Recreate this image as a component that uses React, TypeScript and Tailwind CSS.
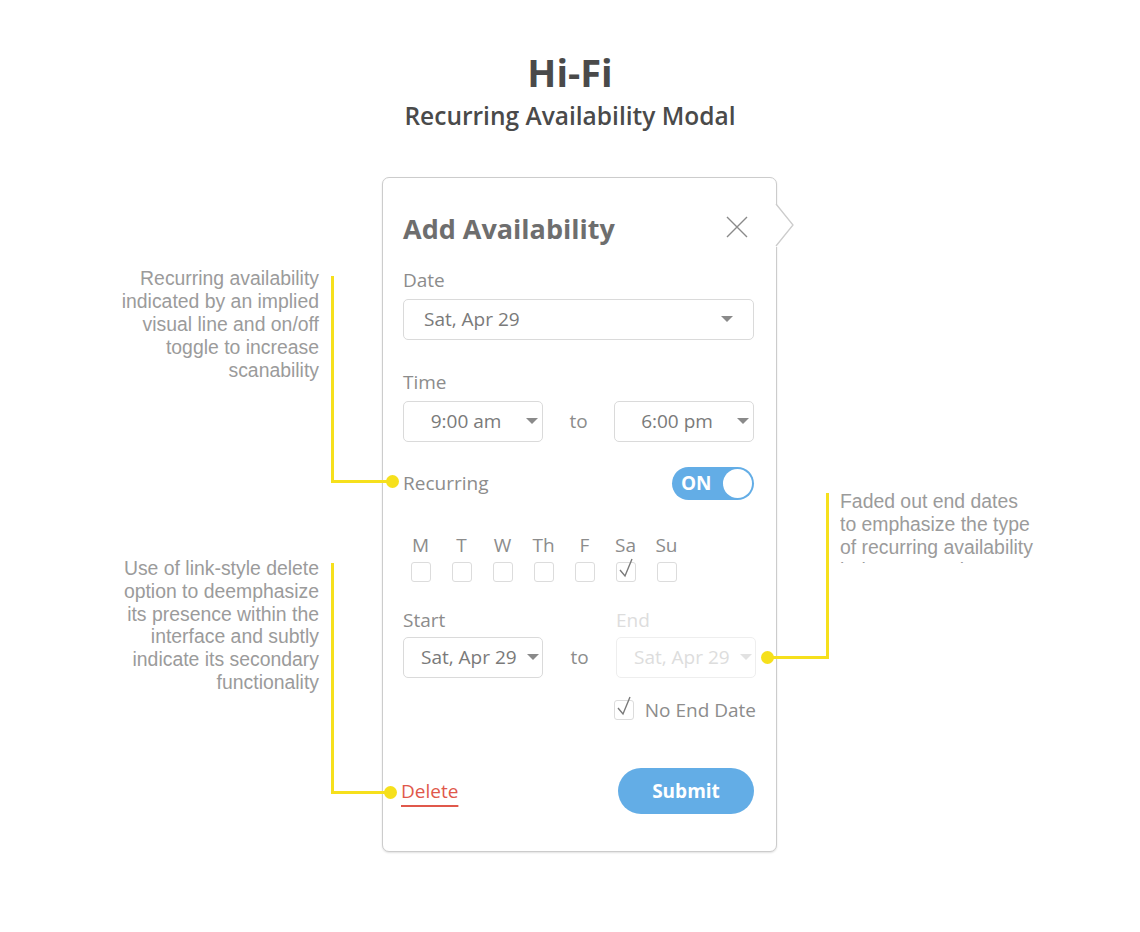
import React from "react";

const Caret = ({ faded = false }: { faded?: boolean }) => (
  <svg width="12" height="7" viewBox="0 0 12 7" className="shrink-0">
    <path d="M0 0 L12 0 L6 6 Z" fill={faded ? "#e2e2e2" : "#8a8a8a"} />
  </svg>
);

const Check = ({ checked = false }: { checked?: boolean }) => (
  <div className="relative w-5 h-5 rounded-[3px] border border-[#dcdcdc] bg-white">
    {checked && (
      <svg width="20" height="24" viewBox="0 0 20 24" className="absolute left-[-1px] top-[-6px]">
        <path d="M4 13 L9 19 L16 2" fill="none" stroke="#7a7a7a" strokeWidth="1.4" />
      </svg>
    )}
  </div>
);

function Select({
  value,
  className = "",
  faded = false,
  textClass = "pl-[20px]",
}: {
  value: string;
  className?: string;
  faded?: boolean;
  textClass?: string;
}) {
  return (
    <div
      className={`flex items-center h-[41px] rounded-[5px] border bg-white ${
        faded ? "border-[#eeeeee] text-[#dddddd]" : "border-[#dadada] text-[#7a7a7a]"
      } ${className}`}
    >
      <span className={`whitespace-nowrap text-[19px] ${textClass}`}>{value}</span>
      <Caret faded={faded} />
    </div>
  );
}

const days = ["M", "T", "W", "Th", "F", "Sa", "Su"];
const noteFont = { fontFamily: '"Liberation Sans", Arial, sans-serif' };

export default function App() {
  return (
    <div
      className="relative w-[1140px] h-[932px] bg-white overflow-hidden"
      style={{ fontFamily: '"Open Sans", sans-serif' }}
    >
      {/* heading */}
      <div className="flex flex-col items-center pt-[48px] text-[#4a4a4a]">
        <h1 className="text-[38px] font-bold leading-[48px]">Hi-Fi</h1>
        <h2 className="text-[24.5px] font-semibold leading-[34px] mt-[3px]">Recurring Availability Modal</h2>
      </div>

      {/* modal */}
      <div className="relative ml-[382px] mt-[44px] w-[395px] h-[675px] rounded-[7px] border border-[#cccccc] shadow-[0_1px_2px_rgba(0,0,0,0.12)] bg-white px-[20px] pt-[32px] flex flex-col">
        <svg width="22" height="48" viewBox="0 0 22 48" className="absolute left-[392px] top-[24px]">
          <rect x="0" y="3" width="3" height="42" fill="white" />
          <polyline points="1,2 18,23 1,44" fill="white" stroke="#cccccc" strokeWidth="1.3" />
        </svg>

        <div className="flex items-center justify-between h-[38px]">
          <span className="text-[27px] font-bold text-[#6e6e6e]">Add Availability</span>
          <svg width="22" height="22" viewBox="0 0 22 22" className="mr-[8px] -mt-[4px]">
            <path d="M1 1 L21 21 M21 1 L1 21" stroke="#8a8a8a" strokeWidth="1.4" />
          </svg>
        </div>

        <div className="mt-[19px] text-[19px] leading-[26px] text-[#8c8c8c]">Date</div>
        <Select value="Sat, Apr 29" className="mt-[6px] h-[40px] w-[351px] justify-between pr-[20px]" />

        <div className="mt-[29px] text-[19px] leading-[26px] text-[#8c8c8c]">Time</div>
        <div className="mt-[6px] flex items-center w-[351px]">
          <Select value="9:00 am" className="w-[140px] pr-[4px]" textClass="flex-1 text-center pl-[2px]" />
          <span className="flex-1 text-center text-[19px] text-[#8c8c8c]">to</span>
          <Select value="6:00 pm" className="w-[140px] pr-[4px]" textClass="flex-1 text-center pl-[2px]" />
        </div>

        <div className="mt-[25px] flex items-center justify-between w-[351px] h-[33px]">
          <span className="text-[19px] text-[#8c8c8c]">Recurring</span>
          <div className="flex items-center w-[82px] h-[33px] rounded-full bg-[#63ade6] pl-[9px] pr-[2px]">
            <span className="flex-1 text-[19px] font-bold text-white">ON</span>
            <div className="w-[29px] h-[29px] rounded-full bg-white" />
          </div>
        </div>

        <div className="mt-[32px] flex -ml-[3px]">
          {days.map((d) => (
            <div key={d} className="w-[41px] flex flex-col items-center">
              <span className="text-[19px] leading-[26px] text-[#8c8c8c]">{d}</span>
              <div className="mt-[4px]">
                <Check checked={d === "Sa"} />
              </div>
            </div>
          ))}
        </div>

        <div className="mt-[25px] flex w-[353px] text-[19px] leading-[26px]">
          <span className="flex-1 text-[#8c8c8c]">Start</span>
          <span className="w-[140px] text-[#dddddd]">End</span>
        </div>
        <div className="mt-[4px] flex items-center w-[353px]">
          <Select value="Sat, Apr 29" className="w-[140px] gap-[10px]" textClass="pl-[17px]" />
          <span className="flex-1 text-center text-[19px] text-[#8c8c8c]">to</span>
          <Select value="Sat, Apr 29" faded className="w-[140px] gap-[10px]" textClass="pl-[17px]" />
        </div>

        <div className="mt-[19px] flex items-center gap-[11px] pl-[211px] whitespace-nowrap">
          <Check checked />
          <span className="text-[19px] leading-[26px] text-[#8c8c8c]">No End Date</span>
        </div>

        <div className="mt-[45px] flex items-center justify-between w-[353px] -ml-[2px]">
          <span className="text-[19px] text-[#e0584b] underline decoration-[1.5px] underline-offset-[7px]">Delete</span>
          <button className="w-[136px] h-[46px] rounded-full bg-[#63ade6] text-white text-[19px] font-bold">
            Submit
          </button>
        </div>
      </div>

      {/* annotations */}
      <div
        className="absolute left-[60px] top-[267px] w-[259px] text-right text-[19.4px] leading-[23px] text-[#9b9b9b]"
        style={noteFont}
      >
        Recurring availability
        <br />
        indicated by an implied
        <br />
        visual line and on/off
        <br />
        toggle to increase
        <br />
        scanability
      </div>
      <div className="absolute left-[331px] top-[276px] w-[3px] h-[207px] bg-[#f6e01c]" />
      <div className="absolute left-[331px] top-[480px] w-[60px] h-[3px] bg-[#f6e01c]" />
      <div className="absolute left-[386px] top-[475px] w-[13px] h-[13px] rounded-full bg-[#f6e01c]" />

      <div
        className="absolute left-[60px] top-[557px] w-[259px] text-right text-[19.4px] leading-[22.8px] text-[#9b9b9b]"
        style={noteFont}
      >
        Use of link-style delete
        <br />
        option to deemphasize
        <br />
        its presence within the
        <br />
        interface and subtly
        <br />
        indicate its secondary
        <br />
        functionality
      </div>
      <div className="absolute left-[331px] top-[563px] w-[3px] h-[231px] bg-[#f6e01c]" />
      <div className="absolute left-[331px] top-[791px] w-[58px] h-[3px] bg-[#f6e01c]" />
      <div className="absolute left-[384px] top-[786px] w-[13px] h-[13px] rounded-full bg-[#f6e01c]" />

      <div
        className="absolute left-[840px] top-[490px] w-[240px] h-[73px] overflow-hidden text-[19.4px] leading-[23px] text-[#9b9b9b]"
        style={noteFont}
      >
        Faded out end dates
        <br />
        to emphasize the type
        <br />
        of recurring availability
        <br />
        being targeted
      </div>
      <div className="absolute left-[826px] top-[493px] w-[3px] h-[166px] bg-[#f6e01c]" />
      <div className="absolute left-[767px] top-[656px] w-[62px] h-[3px] bg-[#f6e01c]" />
      <div className="absolute left-[761px] top-[651px] w-[13px] h-[13px] rounded-full bg-[#f6e01c]" />
    </div>
  );
}
